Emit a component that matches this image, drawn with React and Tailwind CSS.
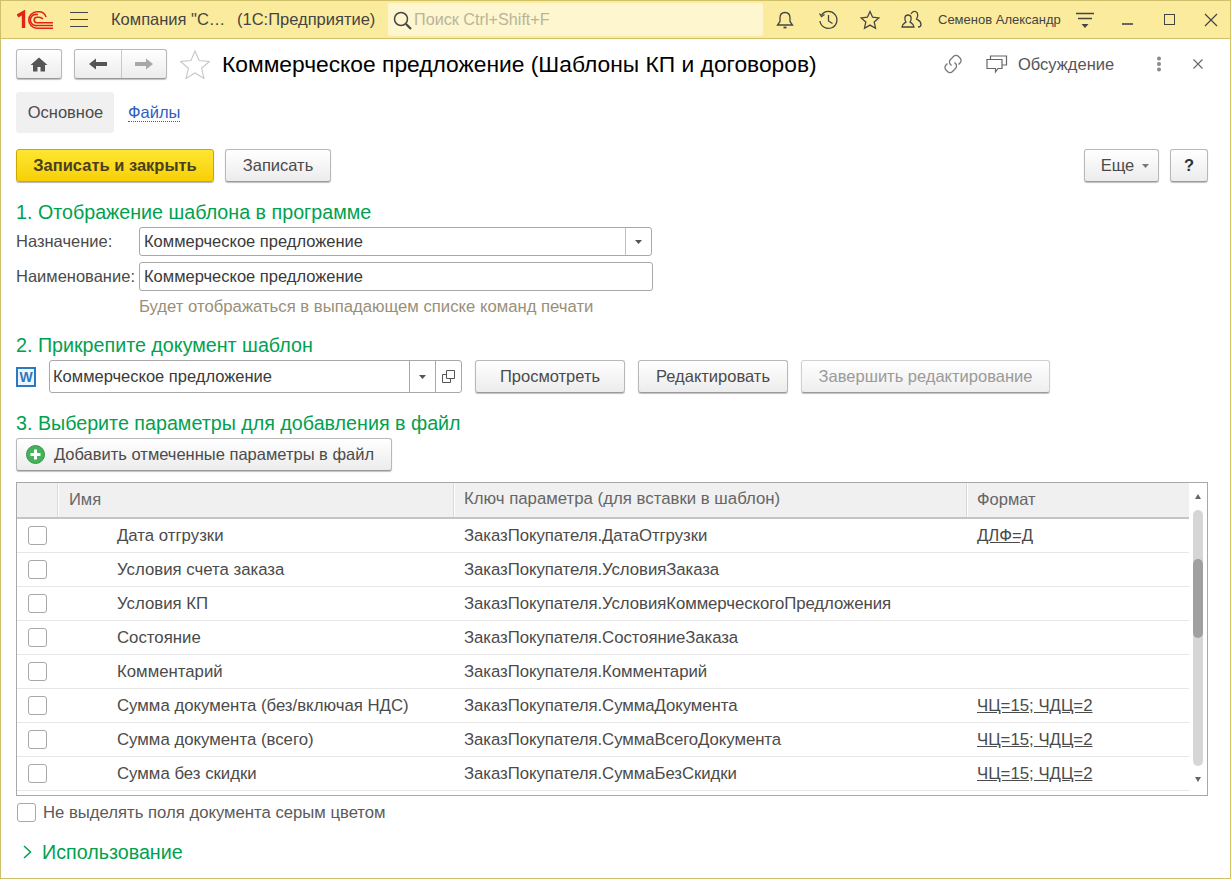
const Sans = "font-['Liberation_Sans',Arial,sans-serif]";

function Logo() {
  return (
    <svg width="37" height="20" viewBox="0 0 37 20" fill="none" stroke="#e2231a" className="shrink-0">
      <path d="M0.500 6 L6.500 2.500 V18" strokeWidth="3.400" />
      <path d="M36 15.500 H20 A5.600 5.600 0 1 1 20 4.500 H21" strokeWidth="1.600" />
      <path d="M36 18.200 H20 A8.200 8.200 0 1 1 20 1.800 H22 C26 1.800 28 4 29 7" strokeWidth="1.600" />
      <path d="M36 12.800 H20 A2.800 2.800 0 1 1 20 7.200 H22 C24 7.200 25 8 26 9" strokeWidth="1.600" />
    </svg>
  );
}

const I = ({ w = 24, h = 24, vb, children, cls = "" }) => (
  <svg width={w} height={h} viewBox={vb || `0 0 ${w} ${h}`} fill="none" stroke="#444" strokeWidth="1.3" className={"shrink-0 " + cls}>
    {children}
  </svg>
);

function Btn({ children, cls = "", disabled }) {
  return (
    <div className={`flex items-center justify-center h-[33px] rounded-[3px] border border-[#b8b8b8] border-b-[#9a9a9a] bg-gradient-to-b from-white to-[#ececec] shadow-[0_1px_1px_rgba(0,0,0,0.25)] whitespace-nowrap ${disabled ? "text-[#9a9a9a] border-[#d0d0d0] from-[#f4f4f4] to-[#eeeeee]" : "text-[#4b4b4b]"} ${cls}`}>
      {children}
    </div>
  );
}

const Caret = ({ color = "#555" }) => (
  <svg width="7" height="4" viewBox="0 0 7 4" className="shrink-0"><path d="M0 0H7L3.500 4Z" fill={color} /></svg>
);

const Heading = ({ children, cls = "" }) => (
  <div className={`text-[19.700px] leading-[22px] text-[#00a14f] ${cls}`}>{children}</div>
);

const Check = ({ cls = "" }) => (
  <div className={`w-[19px] h-[19px] rounded-[3px] border border-[#a8a8a8] bg-white shrink-0 ${cls}`} />
);

const rows = [
  ["Дата отгрузки", "ЗаказПокупателя.ДатаОтгрузки", "ДЛФ=Д"],
  ["Условия счета заказа", "ЗаказПокупателя.УсловияЗаказа", ""],
  ["Условия КП", "ЗаказПокупателя.УсловияКоммерческогоПредложения", ""],
  ["Состояние", "ЗаказПокупателя.СостояниеЗаказа", ""],
  ["Комментарий", "ЗаказПокупателя.Комментарий", ""],
  ["Сумма документа (без/включая НДС)", "ЗаказПокупателя.СуммаДокумента", "ЧЦ=15; ЧДЦ=2"],
  ["Сумма документа (всего)", "ЗаказПокупателя.СуммаВсегоДокумента", "ЧЦ=15; ЧДЦ=2"],
  ["Сумма без скидки", "ЗаказПокупателя.СуммаБезСкидки", "ЧЦ=15; ЧДЦ=2"],
];

export default function App() {
  return (
    <div className={`${Sans} w-[1231px] h-[879px] overflow-hidden bg-white border-x border-b border-[#cfc06c] box-border text-[16.500px] text-[#4b4b4b] flex flex-col`}>
      {/* Top bar */}
      <div className="h-[39px] shrink-0 bg-[#fbec9d] border-b border-[#cfc06c] border-t border-t-[#cfc06c] flex items-center text-[#4a4a3a]">
        <div className="ml-[16px]"><Logo /></div>
        <div className="ml-[16px] w-[18px] flex flex-col gap-[5.500px]">
          <div className="h-[1.500px] bg-[#444]" /><div className="h-[1.500px] bg-[#444]" /><div className="h-[1.500px] bg-[#444]" />
        </div>
        <div className="ml-[23px] w-[126px] whitespace-nowrap text-[#444]">Компания "С…</div>
        <div className="w-[138px] whitespace-nowrap text-[#444]">(1С:Предприятие)</div>
        <div className="ml-[13px] w-[375px] h-[33px] bg-[#fdf6cf] rounded-[2px] flex items-center pl-[3px] gap-[1px]">
          <I w={22} h={22}><circle cx="10" cy="10" r="6.500" strokeWidth="1.500" /><path d="M15 15L20 20" strokeWidth="2.200" /></I>
          <span className="text-[#b9b49a] text-[16.200px]">Поиск Ctrl+Shift+F</span>
        </div>
        <div className="ml-[11px] flex items-center">
          <I w={22} h={22}><path d="M11 3.500c-3.400 0-5 2.600-5 5.500v3.500L3.500 16h15L16 12.500V9c0-2.900-1.600-5.500-5-5.500Z" /><path d="M9.500 18.500h3" strokeWidth="1.800" /></I>
          <I w={22} h={22} cls="ml-[21px]"><path d="M4.500 6A8.500 8.500 0 1 1 3 12" /><path d="M2.500 4.500 4.500 7.500 7.500 5.500" /><path d="M11.500 6v6l4 2.500" /></I>
          <I w={22} h={22} cls="ml-[20px]"><path d="M11 2.500l2.600 5.700 6.200.7-4.600 4.200 1.300 6.100L11 16.100l-5.500 3.100 1.300-6.100L2.200 8.900l6.200-.7Z" /></I>
          <I w={24} h={22} cls="ml-[19px]"><path d="M2 18c0-3 2-3.500 4-5-2-3-1.500-7 2-7s4 4 2 7c2 1.500 4 2 4 5Z" /><path d="M11 5c1-2 3-3 4.500-2.500 3 1 2.500 5 1 7.500 2 1.500 4.500 2 4.500 5.500 0 1-.5 2.500-3 2.500" /></I>
        </div>
        <div className="ml-[14px] w-[122px] text-[13px] whitespace-nowrap text-[#444]">Семенов Александр</div>
        <I w={20} h={18} cls="ml-[15px]"><path d="M1 2.500H19M3 7.500H17" /><path d="M6.500 13H13.500L10 17Z" fill="#444" stroke="none" /></I>
        <div className="ml-[27px] w-[11px] h-[1.500px] bg-[#666] mt-[9px] shrink-0" />
        <div className="ml-[31px] w-[11px] h-[11px] border border-[#444] shrink-0" />
        <I w={14} h={14} cls="ml-[29px]"><path d="M1 1L13 13M13 1L1 13" strokeWidth="1.200" /></I>
      </div>

      {/* Form */}
      <div className="flex-1 flex flex-col pl-[15px] pr-[22px]">
        {/* Title row */}
        <div className="flex items-center mt-[10px] h-[30px]">
          <div className="w-[46px] h-[30px] rounded-[3px] border border-[#b8b8b8] border-b-[#9a9a9a] bg-gradient-to-b from-white to-[#ececec] shadow-[0_1px_1px_rgba(0,0,0,0.25)] flex items-center justify-center">
            <svg width="18" height="15" viewBox="0 0 18 15"><path d="M9 0.500 0.500 8H3V14.500H7.500V10H10.500V14.500H15V8H17.500Z" fill="#555" /></svg>
          </div>
          <div className="ml-[12px] w-[93px] h-[30px] rounded-[3px] border border-[#b8b8b8] border-b-[#9a9a9a] bg-gradient-to-b from-white to-[#ececec] shadow-[0_1px_1px_rgba(0,0,0,0.25)] flex">
            <div className="w-[47px] border-r border-[#c8c8c8] flex items-center justify-center">
              <svg width="18" height="12" viewBox="0 0 18 12"><path d="M0 6 7 0.500V4H18V8H7V11.500Z" fill="#555" /></svg>
            </div>
            <div className="flex-1 flex items-center justify-center">
              <svg width="18" height="12" viewBox="0 0 18 12"><path d="M18 6 11 0.500V4H0V8H11V11.500Z" fill="#a8a8a8" /></svg>
            </div>
          </div>
          <svg width="30" height="29" viewBox="0 0 30 29" fill="none" stroke="#c6c6c6" strokeWidth="1.100" className="ml-[13px] shrink-0"><path d="M15 1l4.100 9.500 10.400 1-7.900 6.800 2.400 10.100L15 23l-9 5.400 2.400-10.100L.5 11.500l10.400-1Z" /></svg>
          <div className="ml-[12px] text-[22.800px] leading-[30px] text-black whitespace-nowrap">Коммерческое предложение (Шаблоны КП и договоров)</div>
          <div className="ml-auto flex items-center text-[#5a6470]">
            <svg width="22" height="22" viewBox="0 0 22 22" fill="none" stroke="#777" strokeWidth="1.300" className="shrink-0"><path d="M9.500 12.500l-1-1a3.500 3.500 0 0 1 0-5l3-3a3.500 3.500 0 0 1 5 0l1.500 1.500a3.500 3.500 0 0 1 0 5l-1.500 1.500" /><path d="M12.500 9.500l1 1a3.500 3.500 0 0 1 0 5l-3 3a3.500 3.500 0 0 1-5 0L4 17a3.500 3.500 0 0 1 0-5l1.500-1.500" /></svg>
            <svg width="22" height="22" viewBox="0 0 22 22" fill="none" stroke="#666" strokeWidth="1.200" className="ml-[22px] shrink-0"><path d="M1 6.500H16V15.500H12L9.500 19V15.500H1Z" /><path d="M4.500 6.500V3H20.500V12H16" /></svg>
            <span className="ml-[10px] w-[96px] text-[#555] whitespace-nowrap">Обсуждение</span>
            <svg width="6" height="16" viewBox="0 0 6 16" className="ml-[42px] shrink-0"><circle cx="3" cy="2.500" r="2" fill="#888" /><circle cx="3" cy="8" r="2" fill="#888" /><circle cx="3" cy="13.500" r="2" fill="#888" /></svg>
            <svg width="10" height="10" viewBox="0 0 10 10" className="ml-[31px] mr-[5px] shrink-0" stroke="#666" strokeWidth="1.100"><path d="M.5.5l9 9M9.500.5l-9 9" /></svg>
          </div>
        </div>

        {/* Tabs */}
        <div className="flex items-center mt-[13px]">
          <div className="w-[98px] h-[41px] bg-[#f0f0f0] rounded-[3px] flex items-center justify-center pl-[1px] text-[#4b4b4b]">Основное</div>
          <div className="ml-[14px] text-[#2f5fc0] border-b border-dotted border-[#2f5fc0] leading-[17px]">Файлы</div>
        </div>

        {/* Command bar */}
        <div className="flex items-center mt-[16px] h-[33px]">
          <div className="w-[198px] h-[33px] rounded-[3px] border border-[#c9a800] bg-gradient-to-b from-[#ffe62e] to-[#f7d000] shadow-[0_1px_1px_rgba(0,0,0,0.3)] flex items-center justify-center font-bold text-[#4a4020]">Записать и закрыть</div>
          <Btn cls="ml-[11px] w-[106px]">Записать</Btn>
          <Btn cls="ml-auto w-[75px] gap-[8px] pl-[7px]">Еще <Caret color="#777" /></Btn>
          <Btn cls="ml-[11px] w-[38px] font-bold text-[#333]">?</Btn>
        </div>

        <Heading cls="mt-[19px]">1. Отображение шаблона в программе</Heading>
        <div className="flex items-center mt-[4px] h-[29px]">
          <span className="w-[123px] text-[#4b4b4b]">Назначение:</span>
          <div className="w-[513px] h-[29px] rounded-[3px] border border-[#a8a8a8] flex items-center text-[#3a3a3a]">
            <span className="pl-[4px] flex-1">Коммерческое предложение</span>
            <div className="w-[26px] h-full border-l border-[#c0c0c0] flex items-center justify-center"><Caret /></div>
          </div>
        </div>
        <div className="flex items-center mt-[6px] h-[29px]">
          <span className="w-[123px] whitespace-nowrap text-[#4b4b4b]">Наименование:</span>
          <div className="w-[514px] h-[29px] rounded-[3px] border border-[#a8a8a8] flex items-center pl-[4px] text-[#3a3a3a]">Коммерческое предложение</div>
        </div>
        <div className="ml-[123px] mt-[7px] leading-[18px] text-[16.700px] text-[#9a8f78]">Будет отображаться в выпадающем списке команд печати</div>

        <Heading cls="mt-[18px]">2. Прикрепите документ шаблон</Heading>
        <div className="flex items-center mt-[4px] h-[33px]">
          <div className="w-[20px] h-[20px] border-2 border-[#2b78c5] bg-[#eef5fb] flex items-center justify-center font-bold text-[14px] leading-none text-[#2b78c5]">W</div>
          <div className="ml-[13px] w-[413px] h-[33px] rounded-[3px] border border-[#a8a8a8] flex items-center text-[#3a3a3a]">
            <span className="pl-[3px] flex-1">Коммерческое предложение</span>
            <div className="w-[26px] h-full border-l border-[#a8a8a8] flex items-center justify-center"><Caret /></div>
            <div className="w-[26px] h-full border-l border-[#a8a8a8] flex items-center justify-center">
              <svg width="13" height="13" viewBox="0 0 13 13" fill="none" stroke="#555"><path d="M4.500 .5H12.500V8.500H4.500Z" /><path d="M4.500 4.500H.5V12.500H8.500V8.500" /></svg>
            </div>
          </div>
          <Btn cls="ml-[13px] w-[150px]">Просмотреть</Btn>
          <Btn cls="ml-[13px] w-[150px]">Редактировать</Btn>
          <Btn disabled cls="ml-[13px] w-[249px]">Завершить редактирование</Btn>
        </div>

        <Heading cls="mt-[19px]">3. Выберите параметры для добавления в файл</Heading>
        <Btn cls="mt-[4px] w-[376px] !justify-start pl-[9px] gap-[9px]">
          <svg width="19" height="19" viewBox="0 0 19 19"><circle cx="9.500" cy="9.500" r="9" fill="#45b15a" stroke="#2e9a47" strokeWidth="1" /><path d="M8 4.500h3V8h3.500v3H11v3.500H8V11H4.500V8H8Z" fill="#fff" /></svg>
          <span>Добавить отмеченные параметры в файл</span>
        </Btn>

        {/* Table */}
        <div className="mt-[11px] w-[1192px] h-[314px] border border-[#a8a8a8] flex overflow-hidden">
          <div className="flex-1 flex flex-col min-w-0">
            <div className="h-[36px] shrink-0 flex bg-[#f0f0f0] border-b-2 border-[#c4c4c4] text-[#666]">
              <div className="w-[41px] border-r border-[#d8d8d8] shadow-[1px_0_0_#fff]" />
              <div className="w-[396px] pl-[11px] pb-[2px] flex items-center border-r border-[#d8d8d8] shadow-[1px_0_0_#fff]">Имя</div>
              <div className="w-[513px] pl-[10px] pb-[2px] text-[16.800px] flex items-center border-r border-[#d8d8d8] shadow-[1px_0_0_#fff]">Ключ параметра (для вставки в шаблон)</div>
              <div className="flex-1 pl-[10px] pb-[2px] flex items-center">Формат</div>
            </div>
            {rows.map((r) => (
              <div key={r[0]} className="h-[34px] shrink-0 flex items-center border-b border-[#e6e6e6] leading-[20px] text-[#4b4b4b]">
                <div className="w-[41px] pl-[11px]"><Check /></div>
                <div className="w-[396px] h-[20px] pl-[59px] text-[16.800px] whitespace-nowrap">{r[0]}</div>
                <div className="w-[513px] h-[20px] pl-[10px] text-[16.800px] tracking-[-0.07px] whitespace-nowrap">{r[1]}</div>
                <div className="flex-1 h-[20px] pl-[10px] text-[16.800px] underline whitespace-nowrap">{r[2]}</div>
              </div>
            ))}
          </div>
          <div className="w-[18px] shrink-0 flex flex-col items-center pt-[11px] pb-[11px]">
            <svg width="6" height="5" viewBox="0 0 6 5" className="shrink-0"><path d="M3 0 6 5H0Z" fill="#666" /></svg>
            <div className="w-[10px] mt-[11px] h-[256px] rounded-[5px] bg-[#d6d6d6] shrink-0 flex flex-col">
              <div className="mt-[49px] h-[79px] rounded-[5px] bg-[#a0a0a0]" />
            </div>
            <svg width="6" height="5" viewBox="0 0 6 5" className="mt-[11px] shrink-0"><path d="M3 5 6 0H0Z" fill="#666" /></svg>
          </div>
        </div>

        <div className="flex items-center mt-[4px] ml-[1px]">
          <Check />
          <span className="ml-[7px] text-[16.700px] text-[#5a5a5a]">Не выделять поля документа серым цветом</span>
        </div>
        <div className="flex items-center mt-[16px] ml-[7px]">
          <svg width="9" height="14" viewBox="0 0 9 14" fill="none" stroke="#00a14f" strokeWidth="1.500" className="shrink-0"><path d="M1 1l6.500 6L1 13" /></svg>
          <span className="ml-[10px] text-[19.700px] leading-[22px] text-[#00a14f]">Использование</span>
        </div>
      </div>
    </div>
  );
}
